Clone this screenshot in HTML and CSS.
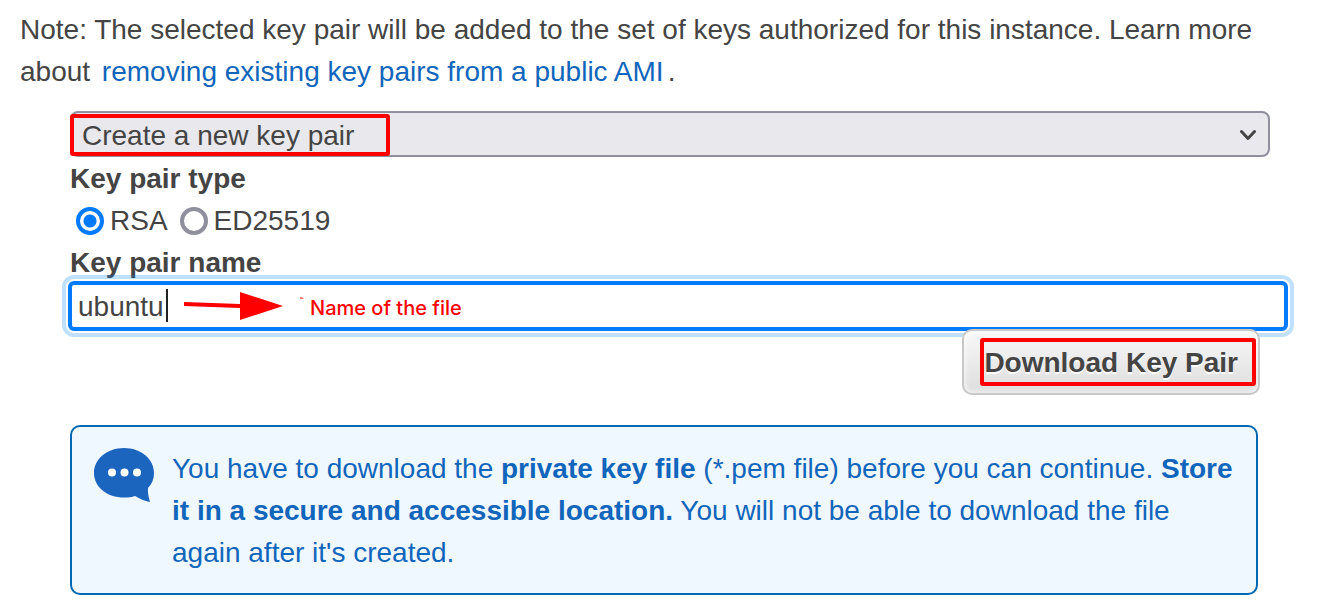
FILE: index.html
```html
<!DOCTYPE html>
<html lang="en">
<head>
<meta charset="utf-8">
<title>Select a key pair</title>
<link rel="stylesheet" href="styles.css">
</head>
<body>
<main class="dialog">
  <p class="note">Note: The selected key pair will be added to the set of keys authorized for this instance. Learn more about <a class="link" href="#ami">removing existing key pairs from a public AMI</a>.</p>
  <form class="form">
    <div class="select-wrap">
      <select class="select" aria-label="Key pair option"><option>Create a new key pair</option></select>
      <svg class="chevron" viewBox="0 0 16 10" aria-hidden="true"><path d="M1.500 1.500 8 8.500 14.500 1.500"/></svg>
      <span class="mark mark-select"></span>
    </div>
    <fieldset class="types">
      <legend class="label">Key pair type</legend>
      <div class="radios">
        <label class="choice"><input class="radio" type="radio" name="type" checked>RSA</label>
        <label class="choice"><input class="radio" type="radio" name="type">ED25519</label>
      </div>
    </fieldset>
    <label class="label" for="name">Key pair name</label>
    <div class="name-wrap">
      <input class="name" id="name" type="text" value="ubuntu">
      <span class="caret"></span>
      <div class="hint">
        <svg class="arrow" viewBox="0 0 120 30" aria-hidden="true"><path d="M0 10 56 12V0L99 14 56 28V16L0 14Z"/><path d="M116 5.500h2l2 1h-4z"/></svg>
        <span>Name of the file</span>
      </div>
    </div>
    <div class="actions">
      <button class="download" type="button">Download Key Pair<span class="mark mark-button"></span></button>
    </div>
    <div class="alert">
      <svg class="bubble" viewBox="0 0 60 54" aria-hidden="true"><path d="M30 0C47 0 60 11 60 25C60 31 58 36 54 40C53.500 44 54.500 49 56 54C50 53 45 50 41 48C38 49 34 49.500 30 49.500C13 49.500 0 39 0 25C0 11 13 0 30 0Z"/><g fill="#fff"><circle cx="18" cy="24.500" r="4"/><circle cx="30.500" cy="24.500" r="4"/><circle cx="43" cy="24.500" r="4"/></g></svg>
      <p class="alert-text">You have to download the <strong>private key file</strong> (*.pem file) before you can continue. <strong>Store it in a secure and accessible location.</strong> You will not be able to download the file again after it's created.</p>
    </div>
  </form>
</main>
</body>
</html>
```
FILE: styles.css
```css
* { box-sizing: border-box; }
body {
  margin: 0;
  background: #fff;
  color: #444;
  font: 28px/42px "Liberation Sans", Arial, sans-serif;
}
.dialog { padding: 9px 52px 19px 20px; }
.note { margin: 0 -20px 18px 0; }
.link { color: #1166bb; text-decoration: none; margin: 0 4px; }
.form { padding-left: 50px; }
.select-wrap { position: relative; margin-right: 4px; }
.select {
  display: block;
  appearance: none;
  width: 100%;
  height: 46px;
  padding: 2px 10px 0;
  border: 2px solid #8f8f9d;
  border-radius: 8px;
  background: #e9e9ed;
  color: #444;
  font: inherit;
}
.chevron {
  position: absolute;
  right: 14px;
  top: 18px;
  width: 16px;
  height: 12px;
  fill: none;
  stroke: #444;
  stroke-width: 3;
  stroke-linecap: round;
  stroke-linejoin: round;
}
.mark {
  position: absolute;
  border: 4px solid #f00;
  border-radius: 3px;
  pointer-events: none;
}
.mark-select { left: 0; top: 3px; width: 320px; height: 42px; }
.types { margin: 1px 0 0; padding: 0; border: 0; }
.label { display: block; padding: 0; font-weight: bold; }
.radios { display: flex; gap: 12px; padding-left: 6px; }
.choice { display: flex; align-items: center; gap: 6px; }
.radio {
  appearance: none;
  width: 28px;
  height: 28px;
  margin: 0;
  border: 4px solid #8f8f9d;
  border-radius: 50%;
  background: #fff;
}
.radio:checked {
  border-color: #007aff;
  background: radial-gradient(circle, #007aff 6px, #fff 7px);
}
.name-wrap { position: relative; margin: -3px -14px 0 -2px; }
.name {
  display: block;
  width: 100%;
  height: 50px;
  padding: 2px 6px 0;
  border: 4px solid #007aff;
  border-radius: 6px;
  outline: 4px solid rgba(0, 136, 255, 0.25);
  outline-offset: 2px;
  background: #fff;
  color: #444;
  font: inherit;
}
.caret { position: absolute; left: 98px; top: 8px; width: 2px; height: 33px; background: #222; }
.hint {
  position: absolute;
  left: 116px;
  top: 6px;
  display: flex;
  align-items: center;
  gap: 6px;
  color: #f00;
  font: 500 20px/42px Inter, sans-serif;
}
.arrow { width: 120px; height: 30px; margin-bottom: 2px; fill: #f00; }
.actions { position: relative; display: flex; justify-content: flex-end; padding-right: 14px; margin-top: -2px; }
.download {
  position: relative;
  height: 66px;
  padding: 2px 20px 0;
  border: 2px solid #c8c8c8;
  border-radius: 10px;
  background: linear-gradient(#f8f8f8, #dddddd);
  box-shadow: inset 0 0 6px #fff;
  color: #444;
  text-shadow: 0 2px 0 #fff;
  font: inherit;
  font-weight: bold;
}
.mark-button { inset: 7px 2px 7px 16px; }
.alert {
  display: flex;
  align-items: flex-start;
  gap: 18px;
  margin: 30px 16px 0 0;
  padding: 21px 18px 19px 22px;
  border: 2px solid #0067b3;
  border-radius: 10px;
  background: #f0f8ff;
  color: #1166bb;
}
.bubble { flex: none; width: 60px; height: 54px; fill: #1b65bf; }
.alert-text { margin: 0; }
```
